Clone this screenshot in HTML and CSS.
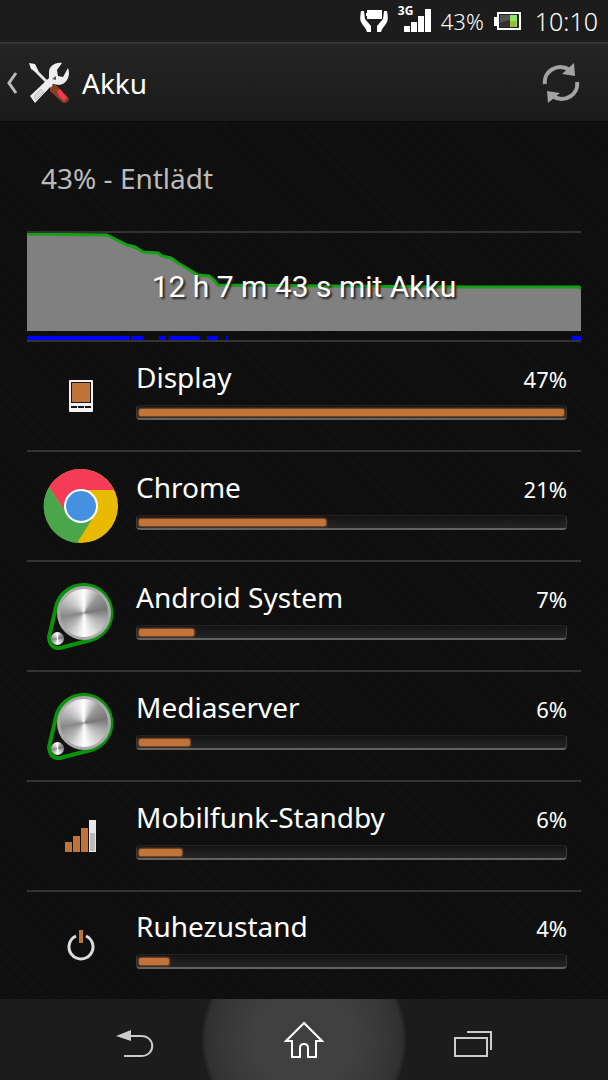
FILE: index.html
```html
<!DOCTYPE html>
<html lang="de">
<head>
<meta charset="UTF-8">
<meta name="viewport" content="width=device-width, initial-scale=1.0">
<title>Akku</title>
<link rel="stylesheet" href="styles.css">
</head>
<body>
<div class="statusbar">
<svg class="icon" width="28" height="24" viewBox="0 0 28 24" fill="#fff"><path d="M7 1h15v9H7V7H6V4h1zM1 2h3l1 8 6 7v6H7c-1-4-4-6-6-10C0 11 0 8 1 2zM27 2h-3l-1 8-6 7v6h4c1-4 4-6 6-10 1-2 1-5 0-11z"/></svg>
<div class="signal">
<span class="network">3G</span>
<svg class="icon" width="27" height="24" viewBox="0 0 27 24" fill="#fff"><path d="M0 17h6v6H0zM7 13h6v10H7zM14 7h6v16h-6zM21 0h6v23h-6z"/></svg>
</div>
<span class="percent">43%</span>
<svg class="icon" width="27" height="20" viewBox="0 0 27 20"><path fill="#fff" d="M3 1h24v18H3v-4H0V6h3z"/><path fill="#242424" d="M5 3h20v14H5z"/><path fill="#555" d="M6 4h10v5L6 12z"/><path fill="#333" d="M6 12l10-3v7H6z"/><path fill="#8de466" d="M16 4h7v12h-7z"/><path fill="#9cba2c" d="M16 10h6v6h-6z"/></svg>
<time class="clock">10:10</time>
</div>

<header class="header">
<a class="back" href="#">
<svg class="icon" width="12" height="24" viewBox="0 0 12 24"><path d="M10 2L3 12l7 10" fill="none" stroke="#bbb" stroke-width="3"/></svg>
<svg class="icon" width="42" height="42" viewBox="0 0 42 42">
<path d="M6 7l22 22" stroke="#e4e4e4" stroke-width="3"/>
<path d="M1 1l6 1 3 6 1 3-3-1-5-3z" fill="#f2f2f2"/>
<path d="M22 26l5-4 13 13q2 3-1 5t-5 0L22 29z" fill="#8b3f1c"/>
<path d="M29 29l3-2 7 9-3 3-5-5z" fill="#f2395b"/>
<path d="M2 34L21 16V9c1-5 6-9 13-8l-5 7 1 6 5 1 5-9c3 7-1 16-9 17l-6-1L7 41z" fill="#eee"/>
<path d="M6 34l7-7 3 3-8 8z" fill="#ddd" stroke="#bbb"/>
<path d="M24 17l4-3v4z" fill="#555"/>
</svg>
<h1 class="title">Akku</h1>
</a>
<button class="refresh" type="button" aria-label="Aktualisieren">
<svg class="icon" width="38" height="40" viewBox="0 0 38 40"><g fill="none" stroke="#a3a3a3" stroke-width="4"><path d="M3 21C1 9 15-1 28 7"/><path d="M35 19c2 12-12 22-25 14"/></g><path fill="#a3a3a3" d="M32 0l1 13-13-2zM6 40L5 28l13 2z"/></svg>
</button>
</header>

<main class="content">
<h2 class="status">43% - Entlädt</h2>

<div class="chart">
<svg class="graph" viewBox="0 0 554 107" preserveAspectRatio="none">
<path fill="#808080" d="M0 1H80L100 12 116 19H131L135 22 144 25 151 30 171 42H182L191 53L440 54 554 55V98H0z"/>
<path fill="none" stroke="#15a015" stroke-width="3" d="M0 1L80 2 100 12 108 14 116 19 131 20 135 23 144 25 151 30 171 42 182 43 187 47 191 52 300 53 440 54 552 54 554 56"/>
<path fill="#00f" d="M0 103h102v4H0zM104 103h12v4h-12zM132 103h7v4h-7zM142 103h31v4h-31zM180 103h11v4h-11zM199 103h1v4h-1zM545 103h9v4h-9z"/>
</svg>
<p class="duration">12 h 7 m 43 s mit Akku</p>
</div>

<ul class="usage">
<li class="item">
<svg class="icon" width="24" height="32" viewBox="0 0 24 32"><path fill="#f2f2f2" d="M1 0h22q1 0 1 1v30q0 1-1 1H1q-1 0-1-1V1q0-1 1-1z"/><path fill="#161616" d="M2 2h20v21H2zM2 26h6v2H2zM9 26h6v2H9zM16 26h6v2h-6z"/><path fill="#c17439" d="M3 3h18v19H3z"/></svg>
<div class="info">
<span class="name">Display</span>
<span class="value">47%</span>
<div class="track"><div class="fill" style="width: 100%"></div></div>
</div>
</li>
<li class="item">
<svg class="icon" width="76" height="76" viewBox="0 0 76 76"><circle cx="38" cy="38" r="37" fill="#e8bb02"/><path fill="#f43c56" d="M6 19A37 37 0 0 1 71 22H38L24 46z"/><path fill="#4aa54b" d="M6 19L24 46Q34 58 49 51L34 75A37 37 0 0 1 6 19z"/><circle cx="38" cy="38" r="17" fill="#fff"/><circle cx="38" cy="38" r="15" fill="#4492df"/></svg>
<div class="info">
<span class="name">Chrome</span>
<span class="value">21%</span>
<div class="track"><div class="fill" style="width: 44%"></div></div>
</div>
</li>
<li class="item">
<div class="knob">
<svg class="icon" width="68" height="68" viewBox="0 0 68 68"><path d="M2 55L9 25A28 28 0 1 1 44 58L13 66Q3 67 2 55z" fill="#111" stroke="#0c930c" stroke-width="4"/></svg>
<i class="disc big"></i>
<i class="disc small"></i>
</div>
<div class="info">
<span class="name">Android System</span>
<span class="value">7%</span>
<div class="track"><div class="fill" style="width: 13%"></div></div>
</div>
</li>
<li class="item">
<div class="knob">
<svg class="icon" width="68" height="68" viewBox="0 0 68 68"><path d="M2 55L9 25A28 28 0 1 1 44 58L13 66Q3 67 2 55z" fill="#111" stroke="#0c930c" stroke-width="4"/></svg>
<i class="disc big"></i>
<i class="disc small"></i>
</div>
<div class="info">
<span class="name">Mediaserver</span>
<span class="value">6%</span>
<div class="track"><div class="fill" style="width: 12%"></div></div>
</div>
</li>
<li class="item">
<svg class="icon" width="32" height="32" viewBox="0 0 32 32"><path fill="#c17439" d="M0 22h7v10H0zM8 16h7v16H8zM16 8h7v24h-7z"/><path fill="#e8e8e8" d="M24 0h7v32h-7z"/><path fill="#bbb" d="M25 13h5v18h-5z"/></svg>
<div class="info">
<span class="name">Mobilfunk-Standby</span>
<span class="value">6%</span>
<div class="track"><div class="fill" style="width: 10%"></div></div>
</div>
</li>
<li class="item">
<svg class="icon" width="30" height="32" viewBox="0 0 30 32"><path d="M10 6a12 12 0 1 0 10 0" fill="none" stroke="#ddd" stroke-width="3"/><path fill="#c17439" d="M13 0h4v13h-4z"/></svg>
<div class="info">
<span class="name">Ruhezustand</span>
<span class="value">4%</span>
<div class="track"><div class="fill" style="width: 7%"></div></div>
</div>
</li>
</ul>
</main>

<nav class="navbar">
<button type="button" aria-label="Zurück"><svg class="icon" width="40" height="28" viewBox="0 0 40 28"><path fill="#ccc" d="M1 6l15-6v11z"/><path fill="none" stroke="#ccc" stroke-width="2" d="M16 6h10c15 0 15 20 0 20H9"/></svg></button>
<button class="home" type="button" aria-label="Startseite"><svg class="icon" width="40" height="38" viewBox="0 0 40 38"><path fill="none" stroke="#fff" stroke-width="2" d="M20 2L2 20h6v16h8V27q0-4 4-4t4 4v9h8V20h6z"/></svg></button>
<button type="button" aria-label="Letzte Apps"><svg class="icon" width="40" height="28" viewBox="0 0 40 28"><path fill="none" stroke="#ccc" stroke-width="2" d="M2 8h32v18H2zM14 2h24v18"/></svg></button>
</nav>
</body>
</html>
```
FILE: styles.css
```css
* {
box-sizing: border-box;
}

body {
margin: 0;
min-height: 100vh;
display: flex;
flex-direction: column;
font-family: "Noto Sans", "Open Sans", sans-serif;
color: #fff;
background: #0e0e0e repeating-linear-gradient(45deg, #0c0c0c 0 1px, #111 1px 3px);
}

h1, h2, p, ul {
margin: 0;
padding: 0;
font-weight: 400;
}

button {
background: none;
border: none;
padding: 0;
cursor: pointer;
}

.icon {
display: block;
flex: none;
}

/* status bar */
.statusbar {
height: 44px;
display: flex;
align-items: center;
justify-content: flex-end;
gap: 10px;
padding: 0 10px;
background: #1c1c1c;
border-bottom: 2px solid #353535;
font-weight: 300;
}

.signal {
position: relative;
padding-left: 6px;
}

.network {
position: absolute;
top: -4px;
left: 0;
font-size: 12px;
line-height: 12px;
font-weight: 700;
}

.percent {
font-size: 22px;
}

.clock {
margin-left: 4px;
font-size: 25px;
}

/* title bar */
.header {
height: 78px;
display: flex;
align-items: center;
justify-content: space-between;
padding: 0 28px 0 6px;
background: linear-gradient(#242424, #1b1b1b);
border-bottom: 1px solid #0b0b0b;
}

.back {
display: flex;
align-items: center;
gap: 10px;
color: #fff;
text-decoration: none;
}

.title {
margin-left: 2px;
font-size: 28px;
line-height: 40px;
}

/* list */
.content {
flex: 1;
padding: 0 27px;
}

.status {
padding: 36px 14px 33px;
font-size: 28px;
line-height: 40px;
color: #bbb;
}

.chart {
position: relative;
border-top: 2px solid #333;
border-bottom: 2px solid #333;
}

.graph {
display: block;
width: 100%;
height: 107px;
}

.duration {
position: absolute;
top: 36px;
left: 0;
width: 100%;
text-align: center;
font-family: Roboto, sans-serif;
font-size: 30px;
line-height: 36px;
text-shadow: 2px 2px 2px #222;
}

.usage {
list-style: none;
}

.item {
height: 110px;
display: grid;
grid-template-columns: 108px 1fr;
align-items: center;
border-bottom: 2px solid #333;
}

.item:last-child {
height: 107px;
border-bottom: none;
}

.item > .icon,
.knob {
justify-self: center;
}

.info {
display: grid;
grid-template-columns: 1fr auto;
align-items: baseline;
row-gap: 8px;
padding: 0 14px 16px 1px;
}

.name {
font-size: 28px;
line-height: 40px;
}

.value {
font-size: 22px;
line-height: 30px;
}

.track {
grid-column: 1 / 3;
height: 15px;
padding: 3px 2px;
border: 1px solid #3a3a3a;
border-top-color: #222;
border-bottom: 2px solid #626262;
border-radius: 4px;
background: linear-gradient(#141414, #252525);
}

.fill {
height: 7px;
border-radius: 2px;
background: #c17439;
box-shadow: 0 0 2px 1px #8a5028;
}

.knob {
position: relative;
}

.disc {
position: absolute;
border-radius: 50%;
background: conic-gradient(#fff, #999 40deg, #777 80deg, #aaa 110deg, #fff 180deg, #bbb 220deg, #888 260deg, #bbb 300deg, #fff);
}

.big {
top: 4px;
left: 10px;
width: 54px;
height: 54px;
border: 3px solid #aaa;
}

.small {
top: 50px;
left: 4px;
width: 13px;
height: 13px;
}

/* navigation keys */
.navbar {
flex: none;
height: 81px;
display: grid;
grid-template-columns: 1fr 204px 1fr;
padding: 0 68px;
background: #1c1c1c;
}

.navbar button {
display: flex;
align-items: center;
justify-content: center;
padding-top: 8px;
}

.navbar .home {
padding-top: 0;
background: radial-gradient(circle, #404040 0 50px, #383838 80px, #303030 98px, #1c1c1c 103px);
}
```
